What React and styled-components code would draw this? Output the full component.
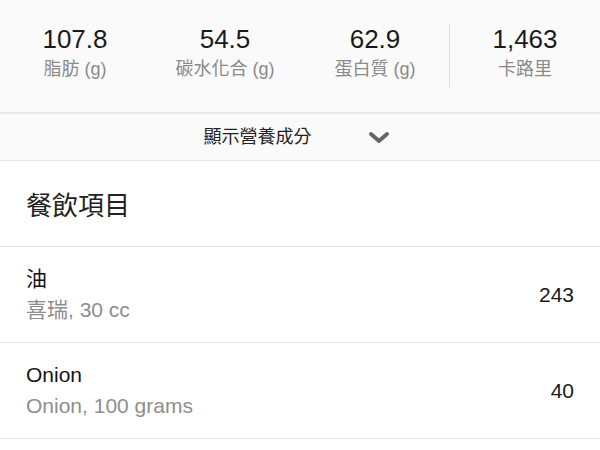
import styled, { createGlobalStyle } from "styled-components";

const GlobalStyle = createGlobalStyle`
  html, body {
    margin: 0;
    padding: 0;
    background: #ffffff;
  }
  body {
    font-family: "Liberation Sans", "Noto Sans CJK TC", sans-serif;
    color: #1a1a1a;
  }
`;

const Page = styled.div`
  width: 600px;
  height: 450px;
  overflow: hidden;
  background: #ffffff;
`;

const Summary = styled.div`
  display: grid;
  grid-template-columns: repeat(4, 1fr);
  height: 89px;
  padding-top: 23px;
  background: #fafafa;
  border-bottom: 2px solid #e8e8e8;
`;

const Stat = styled.div`
  display: flex;
  flex-direction: column;
  align-items: center;
  height: 64px;
  box-sizing: border-box;
  padding-top: 1px;
  border-left: ${(p) => (p.$divided ? "1px solid #dedede" : "none")};
  margin-left: ${(p) => (p.$divided ? "-1px" : "0")};
`;

const StatValue = styled.div`
  font-size: 26px;
  line-height: 30px;
  color: #1a1a1a;
`;

const StatLabel = styled.div`
  margin-top: 4px;
  font-size: 18px;
  line-height: 22px;
  color: #8a8a8a;
`;

const Toggle = styled.div`
  display: flex;
  align-items: center;
  justify-content: center;
  gap: 57px;
  height: 46px;
  padding-right: 8px;
  background: #fafafa;
  border-bottom: 1px solid #e6e6e6;
`;

const ToggleText = styled.span`
  font-size: 18px;
  line-height: 22px;
  color: #222;
`;

const SectionTitle = styled.div`
  display: flex;
  align-items: center;
  height: 85px;
  padding-left: 26px;
  font-size: 26px;
  color: #222;
  border-bottom: 1px solid #e3e3e3;
`;

const Row = styled.div`
  display: flex;
  align-items: center;
  justify-content: space-between;
  height: 95px;
  padding: 0 26px;
  border-bottom: 1px solid #e8e8e8;
`;

const RowText = styled.div`
  display: flex;
  flex-direction: column;
  gap: 3px;
`;

const RowName = styled.div`
  font-size: 21px;
  line-height: 28px;
  color: #141414;
`;

const RowDetail = styled.div`
  font-size: 21px;
  line-height: 28px;
  color: #8e8e8e;
`;

const RowValue = styled.div`
  font-size: 21px;
  color: #1a1a1a;
`;

const stats = [
  { value: "107.8", label: "脂肪 (g)" },
  { value: "54.5", label: "碳水化合 (g)" },
  { value: "62.9", label: "蛋白質 (g)" },
  { value: "1,463", label: "卡路里", divided: true },
];

const items = [
  { name: "油", detail: "喜瑞, 30 cc", cal: 243 },
  { name: "Onion", detail: "Onion, 100 grams", cal: 40 },
];

const Chevron = () => (
  <svg width="20" height="11" viewBox="0 0 20 11">
    <polyline
      points="2,2 10,9 18,2"
      fill="none"
      stroke="#666"
      strokeWidth="3.8"
      strokeLinecap="round"
      strokeLinejoin="round"
    />
  </svg>
);

const App = () => {
  return (
    <Page>
      <GlobalStyle />
      <Summary>
        {stats.map((s) => (
          <Stat key={s.label} $divided={s.divided}>
            <StatValue>{s.value}</StatValue>
            <StatLabel>{s.label}</StatLabel>
          </Stat>
        ))}
      </Summary>
      <Toggle>
        <ToggleText>顯示營養成分</ToggleText>
        <Chevron />
      </Toggle>
      <SectionTitle>餐飲項目</SectionTitle>
      {items.map((it) => (
        <Row key={it.name}>
          <RowText>
            <RowName>{it.name}</RowName>
            <RowDetail>{it.detail}</RowDetail>
          </RowText>
          <RowValue>{it.cal}</RowValue>
        </Row>
      ))}
    </Page>
  );
};

export default App;
